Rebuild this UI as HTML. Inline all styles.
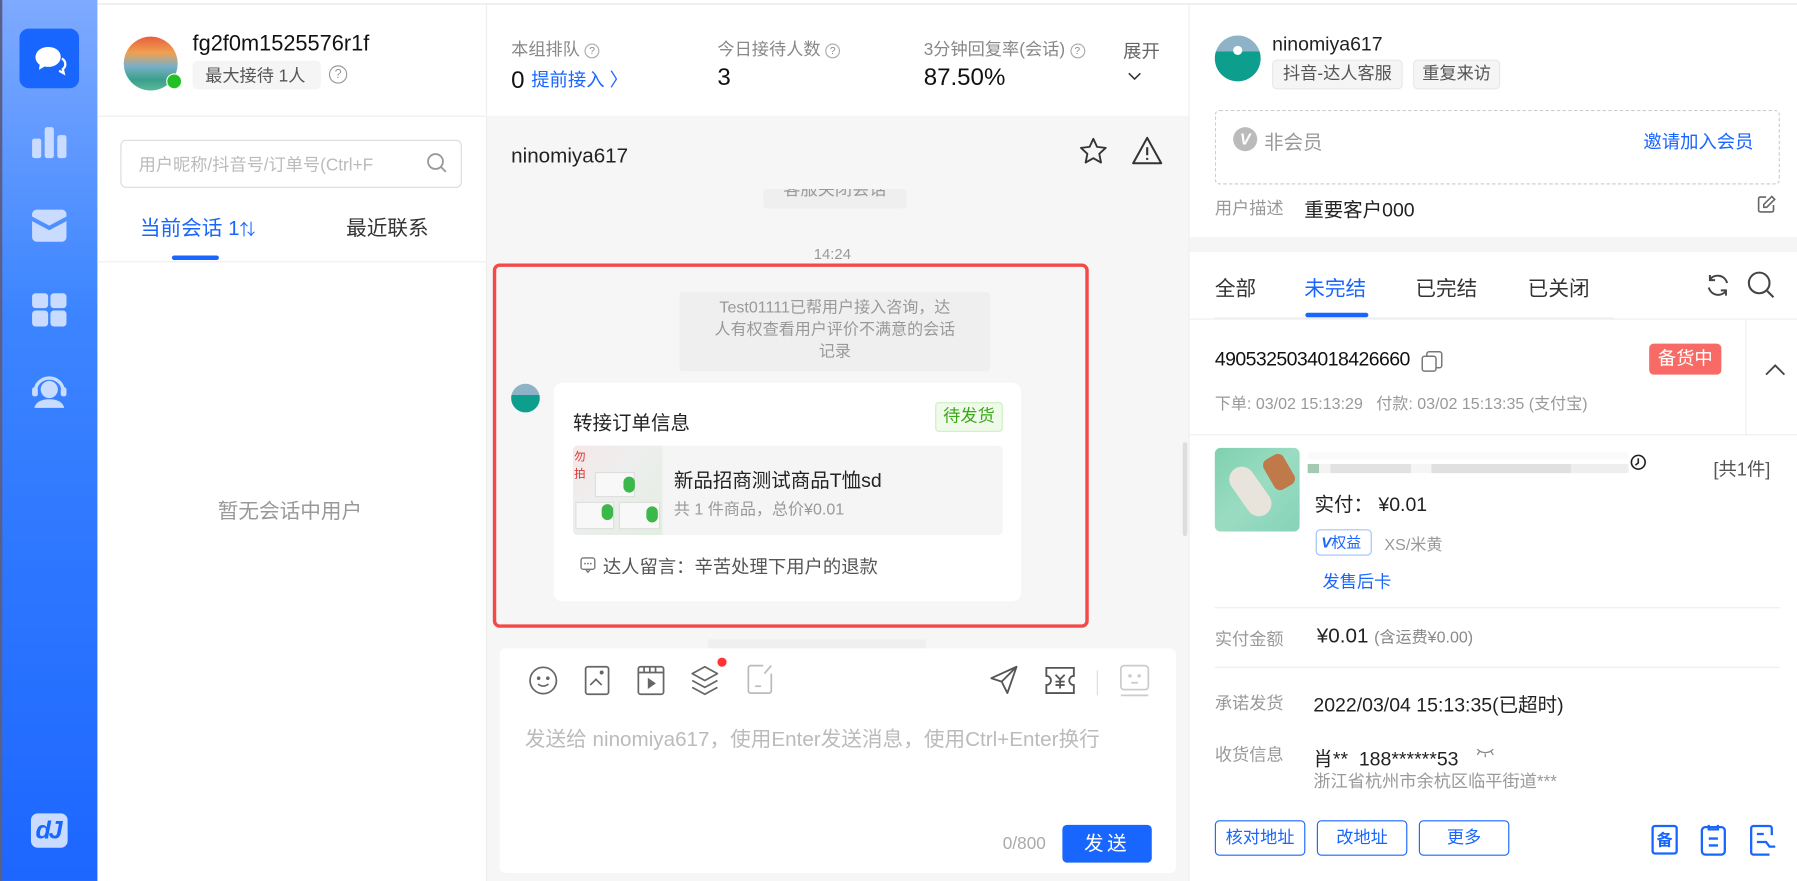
<!DOCTYPE html>
<html><head><meta charset="utf-8">
<style>
*{box-sizing:border-box;margin:0;padding:0}
html,body{width:1797px;height:881px;overflow:hidden;background:#fff}
body{font-family:"Liberation Sans","Noto Sans CJK SC",sans-serif;color:#222}
#w{position:absolute;left:0;top:0;width:1568px;height:769px;transform:scale(1.14605,1.1456);transform-origin:0 0;background:#fff;overflow:hidden}
.a{position:absolute}
.g{color:#999}
.bl{color:#1966ff}
svg{position:absolute;overflow:visible}
</style></head><body><div id="w">
<!-- sidebar -->
<div class="a" style="left:0;top:0;width:85px;height:769px;background:linear-gradient(180deg,#7eaaff 0%,#3d85ff 35%,#2a74ff 70%,#1d66ff 100%)"></div>
<div class="a" style="left:0;top:0;width:2px;height:769px;background:#5a5f8a"></div>
<div class="a" style="left:17px;top:25px;width:52px;height:52px;background:#1966ff;border-radius:8px"></div>
<svg style="left:30px;top:40px" width="28" height="26" viewBox="0 0 28 26"><path d="M12 1C5.5 1 1 5 1 10c0 2.8 1.4 5 3.6 6.5L4 21l5-3c1 .3 2 .4 3 .4 6.5 0 11-4 11-8.9S18.5 1 12 1z" fill="#fff"/><path d="M24 11c2 1.3 3 3 3 5 0 1.8-.8 3.3-2.2 4.4l.8 3.6-4-2.2" fill="none" stroke="#fff" stroke-width="2"/></svg>
<svg style="left:28px;top:110px" width="30" height="28"><rect x="0" y="11" width="8" height="17" rx="2" fill="#c9dcff"/><rect x="11" y="1" width="8" height="27" rx="2" fill="#c9dcff"/><rect x="22" y="8" width="8" height="20" rx="2" fill="#c9dcff"/></svg>
<svg style="left:28px;top:183px" width="30" height="28"><path d="M0 4a4 4 0 014-4h22a4 4 0 014 4v2L15 14 0 6z" fill="#c9dcff"/><path d="M0 10l15 8 15-8v14a4 4 0 01-4 4H4a4 4 0 01-4-4z" fill="#c9dcff"/></svg>
<svg style="left:28px;top:256px" width="30" height="29"><rect x="0" y="0" width="14" height="13" rx="3" fill="#c9dcff"/><rect x="16" y="0" width="14" height="13" rx="3" fill="#c9dcff"/><rect x="0" y="15" width="14" height="14" rx="3" fill="#c9dcff"/><rect x="16" y="15" width="14" height="14" rx="3" fill="#c9dcff"/></svg>
<svg style="left:27px;top:326px" width="32" height="30"><path d="M4 15a12 11 0 0124 0" fill="none" stroke="#c9dcff" stroke-width="3"/><circle cx="16" cy="14" r="7.5" fill="#c9dcff"/><rect x="1" y="12" width="5" height="8" rx="2" fill="#c9dcff"/><rect x="26" y="12" width="5" height="8" rx="2" fill="#c9dcff"/><path d="M3 30c1-5 6-7.5 13-7.5s12 2.5 13 7.5z" fill="#c9dcff"/></svg>
<div class="a" style="left:27px;top:710px;width:32px;height:30px;background:#c9dcff;border-radius:6px"></div>
<div class="a" style="left:31px;top:712px;font:italic bold 22px 'Liberation Sans';color:#1966ff;letter-spacing:-2px">dJ</div>

<div class="a" style="left:85px;top:3px;width:1483px;height:1px;background:#e3e3e3"></div>
<!-- left panel -->
<div class="a" style="left:85px;top:101px;width:340px;height:1px;background:#eee"></div>
<div class="a" style="left:108px;top:32px;width:47px;height:47px;border-radius:50%;background:linear-gradient(180deg,#e8603c 0%,#f0a050 30%,#7ab0c8 55%,#3aa08a 80%,#5cb89a 100%)"></div>
<div class="a" style="left:145px;top:64px;width:14px;height:14px;border-radius:50%;background:#22c022;border:1px solid #fff"></div>
<div class="a" style="left:168px;top:28px;font-size:19px;color:#111">fg2f0m1525576r1f</div>
<div class="a" style="left:168px;top:53px;width:112px;height:25px;background:#f5f5f5;border-radius:4px;font-size:15px;color:#555;padding:2px 0 0 11px">最大接待 1人</div>
<div class="a" style="left:287px;top:57px;width:16px;height:16px;border:1px solid #999;border-radius:50%;font-size:11px;color:#999;text-align:center;line-height:14px">?</div>
<div class="a" style="left:105px;top:122px;width:298px;height:42px;border:1px solid #dcdcdc;border-radius:5px"></div>
<div class="a" style="left:121px;top:133px;font-size:15px;color:#bbb;width:220px;overflow:hidden;white-space:nowrap">用户昵称/抖音号/订单号(Ctrl+F</div>
<svg style="left:372px;top:133px" width="20" height="20"><circle cx="8" cy="8" r="6.5" fill="none" stroke="#999" stroke-width="1.6"/><path d="M13 13l4 4" stroke="#999" stroke-width="1.6"/></svg>
<div class="a bl" style="left:122px;top:185px;font-size:18px">当前会话 1<span style="font-size:14px">⇅</span></div>
<div class="a" style="left:302px;top:185px;font-size:18px;color:#333">最近联系</div>
<div class="a" style="left:150px;top:223px;width:41px;height:4px;border-radius:2px;background:#1966ff"></div>
<div class="a" style="left:85px;top:228px;width:340px;height:1px;background:#eee"></div>
<div class="a g" style="left:190px;top:432px;font-size:18px">暂无会话中用户</div>
<div class="a" style="left:424px;top:4px;width:1px;height:765px;background:#eee"></div>

<!-- middle -->
<div class="a" style="left:425px;top:101px;width:612px;height:668px;background:#f6f6f6"></div>
<div class="a" style="left:446px;top:32px;font-size:15px;color:#888">本组排队 <span style="display:inline-block;width:13px;height:13px;border:1px solid #aaa;border-radius:50%;font-size:9px;text-align:center;line-height:11px;vertical-align:1px">?</span></div>
<div class="a" style="left:446px;top:56px;font-size:21px;color:#111">0 <span class="bl" style="font-size:16px;vertical-align:2px">提前接入 〉</span></div>
<div class="a" style="left:626px;top:32px;font-size:15px;color:#888">今日接待人数 <span style="display:inline-block;width:13px;height:13px;border:1px solid #aaa;border-radius:50%;font-size:9px;text-align:center;line-height:11px;vertical-align:1px">?</span></div>
<div class="a" style="left:626px;top:56px;font-size:21px;color:#111">3</div>
<div class="a" style="left:806px;top:32px;font-size:15px;color:#888">3分钟回复率(会话) <span style="display:inline-block;width:13px;height:13px;border:1px solid #aaa;border-radius:50%;font-size:9px;text-align:center;line-height:11px;vertical-align:1px">?</span></div>
<div class="a" style="left:806px;top:56px;font-size:21px;color:#111">87.50%</div>
<div class="a" style="left:980px;top:31px;font-size:16px;color:#666">展开</div>
<svg style="left:984px;top:63px" width="12" height="8"><path d="M1 1l5 5 5-5" fill="none" stroke="#333" stroke-width="1.4"/></svg>
<div class="a" style="left:446px;top:126px;font-size:18px;color:#222">ninomiya617</div>
<svg style="left:941px;top:119px" width="26" height="26" viewBox="0 0 24 24"><path d="M12 2l3 6.5 7 .8-5.2 4.8 1.4 7L12 17.6 5.8 21.1l1.4-7L2 9.3l7-.8z" fill="none" stroke="#333" stroke-width="1.5" stroke-linejoin="round"/></svg>
<svg style="left:987px;top:118px" width="28" height="28" viewBox="0 0 24 24"><path d="M12 2L1.5 21h21z" fill="none" stroke="#333" stroke-width="1.5" stroke-linejoin="round"/><path d="M12 9v6M12 17v1.5" stroke="#333" stroke-width="1.6"/></svg>
<div class="a" style="left:666px;top:165px;width:125px;height:17px;background:#efefef;border-radius:3px;overflow:hidden"><div style="margin-top:-11px;text-align:center;font-size:15px;color:#999">客服关闭会话</div></div>
<div class="a g" style="left:710px;top:214px;font-size:13px;height:16px;overflow:hidden">14:24</div>
<div class="a" style="left:430px;top:230px;width:520px;height:318px;border:3px solid #f24a48;border-radius:6px"></div>
<div class="a" style="left:593px;top:255px;width:271px;height:69px;background:#efefef;border-radius:3px;font-size:14px;color:#999;text-align:center;line-height:19px;padding-top:4px">Test01111已帮用户接入咨询，达<br>人有权查看用户评价不满意的会话<br>记录</div>
<div class="a" style="left:446px;top:335px;width:25px;height:25px;border-radius:50%;background:linear-gradient(180deg,#8fb3c6 40%,#0e9e8e 40%)"></div>
<div class="a" style="left:483px;top:334px;width:408px;height:191px;background:#fff;border-radius:8px"></div>
<div class="a" style="left:500px;top:355px;font-size:17px;color:#222">转接订单信息</div>
<div class="a" style="left:816px;top:351px;width:59px;height:26px;background:#effaea;border:1px solid #cdeec0;border-radius:3px;color:#3aa818;font-size:15px;text-align:center;line-height:24px">待发货</div>
<div class="a" style="left:500px;top:389px;width:375px;height:78px;background:#f5f5f5;border-radius:4px"></div>
<div class="a" style="left:500px;top:389px;width:78px;height:78px;background:linear-gradient(135deg,#f4e8e8,#eeeeee 40%,#e2eee0);border-radius:4px 0 0 4px"></div>
<div class="a" style="left:519px;top:412px;width:35px;height:22px;background:#f8f8f8;border:1px solid #ddd"></div><div class="a" style="left:544px;top:416px;width:10px;height:14px;background:#3cb84a;border-radius:5px"></div>
<div class="a" style="left:502px;top:438px;width:34px;height:24px;background:#f8f8f8;border:1px solid #ddd"></div><div class="a" style="left:525px;top:440px;width:10px;height:14px;background:#3cb84a;border-radius:5px"></div>
<div class="a" style="left:540px;top:438px;width:36px;height:24px;background:#f8f8f8;border:1px solid #ddd"></div><div class="a" style="left:564px;top:442px;width:10px;height:14px;background:#3cb84a;border-radius:5px"></div>
<div class="a" style="left:501px;top:390px;font-size:10px;color:#d33">勿<br>拍</div>
<div class="a" style="left:588px;top:405px;font-size:17px;color:#222">新品招商测试商品T恤sd</div>
<div class="a g" style="left:588px;top:434px;font-size:14px">共 1 件商品，总价¥0.01</div>
<svg style="left:506px;top:486px" width="14" height="14"><rect x="1" y="1" width="12" height="10" rx="2" fill="none" stroke="#777" stroke-width="1.2"/><path d="M5 11l2 2.5 2-2.5" fill="none" stroke="#777" stroke-width="1.2"/><circle cx="4.5" cy="6" r=".8" fill="#777"/><circle cx="7" cy="6" r=".8" fill="#777"/><circle cx="9.5" cy="6" r=".8" fill="#777"/></svg>
<div class="a" style="left:526px;top:481px;font-size:16px;color:#555">达人留言：辛苦处理下用户的退款</div>
<div class="a" style="left:1032px;top:386px;width:4px;height:82px;background:#ddd;border-radius:2px"></div>
<div class="a" style="left:618px;top:558px;width:190px;height:10px;background:#efefef"></div>
<!-- input -->
<div class="a" style="left:436px;top:566px;width:590px;height:196px;background:#fff;border-radius:5px"></div>
<svg style="left:461px;top:581px" width="26" height="26" viewBox="0 0 26 26" fill="none" stroke="#666" stroke-width="1.5"><circle cx="13" cy="13" r="11.5"/><circle cx="9" cy="11" r=".8" fill="#666"/><circle cx="17" cy="11" r=".8" fill="#666"/><path d="M8.5 16c2.5 2.5 6.5 2.5 9 0"/></svg>
<svg style="left:510px;top:581px" width="22" height="26" fill="none" stroke="#666" stroke-width="1.5"><rect x="1" y="1" width="20" height="24" rx="2"/><path d="M5 17l5-5 5 5"/><circle cx="15" cy="6" r="1" fill="#666"/></svg>
<svg style="left:556px;top:581px" width="24" height="26" fill="none" stroke="#666" stroke-width="1.5"><rect x="1" y="1" width="22" height="24" rx="2"/><path d="M1 6h22M6 1v5M11 1v5M16 1v5"/><path d="M10 12v7l5-3.5z" fill="#666"/></svg>
<svg style="left:602px;top:580px" width="26" height="28" fill="none" stroke="#666" stroke-width="1.5" stroke-linejoin="round"><path d="M13 2L2 8l11 6 11-6z"/><path d="M2 14l11 6 11-6M2 20l11 6 11-6"/></svg>
<div class="a" style="left:626px;top:574px;width:8px;height:8px;border-radius:50%;background:#f33"></div>
<svg style="left:652px;top:580px" width="22" height="26" fill="none" stroke="#bbb" stroke-width="1.5"><path d="M14 1H3a2 2 0 00-2 2v20a2 2 0 002 2h16a2 2 0 002-2V8M21 1l-6 7"/><path d="M7 19h5"/></svg>
<svg style="left:863px;top:580px" width="26" height="27" fill="none" stroke="#555" stroke-width="1.6" stroke-linejoin="round"><path d="M24 2L2 12l9 3 5 10z"/><path d="M24 2L11 15"/></svg>
<svg style="left:911px;top:581px" width="28" height="26" fill="none" stroke="#555" stroke-width="1.6"><path d="M2 2h24v7a4 4 0 000 8v7H2v-7a4 4 0 000-8z"/><path d="M10 8l4 4 4-4M14 12v8M10 14h8M10 17h8"/></svg>
<div class="a" style="left:957px;top:585px;width:1px;height:22px;background:#ddd"></div>
<svg style="left:976px;top:580px" width="28" height="30" fill="none" stroke="#ccc" stroke-width="1.5"><rect x="2" y="1" width="24" height="21" rx="3"/><path d="M2 27h24M11 16h6"/><circle cx="10" cy="10" r=".8" fill="#ccc"/><circle cx="18" cy="10" r=".8" fill="#ccc"/></svg>
<div class="a" style="left:458px;top:631px;font-size:18px;color:#bbb">发送给 ninomiya617，使用Enter发送消息，使用Ctrl+Enter换行</div>
<div class="a" style="left:875px;top:728px;font-size:15px;color:#aaa">0/800</div>
<div class="a" style="left:927px;top:720px;width:78px;height:33px;background:#1966ff;border-radius:4px;color:#fff;font-size:17px;text-align:center;line-height:33px;letter-spacing:3px">发送</div>

<!-- right panel -->
<div class="a" style="left:1037px;top:4px;width:1px;height:765px;background:#eee"></div>
<div class="a" style="left:1060px;top:31px;width:40px;height:40px;border-radius:50%;background:linear-gradient(180deg,#8fb3c6 35%,#0e9e8e 35%)"></div>
<div class="a" style="left:1076px;top:40px;width:8px;height:8px;border-radius:50%;background:#fff"></div>
<div class="a" style="left:1110px;top:29px;font-size:17px;color:#222">ninomiya617</div>
<div class="a" style="left:1110px;top:52px;width:114px;height:26px;background:#f5f5f5;border:1px solid #e8e8e8;border-radius:4px;font-size:15px;color:#555;text-align:center;line-height:24px">抖音-达人客服</div>
<div class="a" style="left:1233px;top:52px;width:76px;height:26px;background:#f5f5f5;border:1px solid #e8e8e8;border-radius:4px;font-size:15px;color:#555;text-align:center;line-height:24px">重复来访</div>
<div class="a" style="left:1060px;top:96px;width:493px;height:65px;border:1px dashed #ccc;border-radius:4px"></div>
<div class="a" style="left:1076px;top:111px;width:21px;height:21px;border-radius:50%;background:#bbb;color:#fff;font:italic bold 14px 'Liberation Sans';text-align:center;line-height:21px">V</div>
<div class="a" style="left:1103px;top:110px;font-size:17px;color:#999">非会员</div>
<div class="a bl" style="left:1434px;top:110px;font-size:16px">邀请加入会员</div>
<div class="a g" style="left:1060px;top:171px;font-size:15px">用户描述</div>
<div class="a" style="left:1138px;top:169px;font-size:17px;color:#222">重要客户000</div>
<svg style="left:1533px;top:170px" width="17" height="17" fill="none" stroke="#666" stroke-width="1.4"><path d="M8 2H3a1.5 1.5 0 00-1.5 1.5v10A1.5 1.5 0 003 15h10a1.5 1.5 0 001.5-1.5V9"/><path d="M13 1.5l2.5 2.5-7 7H6V8.5z"/></svg>
<div class="a" style="left:1038px;top:207px;width:530px;height:13px;background:#f5f5f5"></div>
<div class="a" style="left:1060px;top:238px;font-size:18px;color:#333">全部</div>
<div class="a bl" style="left:1138px;top:238px;font-size:18px">未完结</div>
<div class="a" style="left:1235px;top:238px;font-size:18px;color:#333">已完结</div>
<div class="a" style="left:1333px;top:238px;font-size:18px;color:#333">已关闭</div>
<div class="a" style="left:1139px;top:273px;width:55px;height:4px;border-radius:2px;background:#1966ff"></div>
<div class="a" style="left:1060px;top:277px;width:348px;height:1px;background:#eee"></div>
<div class="a" style="left:1038px;top:278px;width:530px;height:1px;background:#eee"></div>
<svg style="left:1488px;top:238px" width="22" height="22" fill="none" stroke="#444" stroke-width="1.7"><path d="M19 9A8.5 8.5 0 004 6M3 13a8.5 8.5 0 0015 3"/><path d="M4 2v4.5h4.5M18 20v-4.5h-4.5"/></svg>
<svg style="left:1524px;top:236px" width="26" height="26" fill="none" stroke="#444" stroke-width="1.8"><circle cx="11" cy="11" r="9"/><path d="M18 18l5.5 5.5"/></svg>
<div class="a" style="left:1523px;top:279px;width:1px;height:101px;background:#eee"></div>
<div class="a" style="left:1060px;top:304px;font-size:17px;color:#111;letter-spacing:-0.5px">4905325034018426660</div>
<svg style="left:1240px;top:306px" width="19" height="19" fill="none" stroke="#777" stroke-width="1.3"><rect x="1" y="5" width="12" height="13" rx="2"/><path d="M5 5V3a2 2 0 012-2h9a2 2 0 012 2v10a2 2 0 01-2 2h-3"/></svg>
<div class="a" style="left:1439px;top:300px;width:63px;height:27px;background:#f86a66;border-radius:4px;color:#fff;font-size:16px;text-align:center;line-height:27px">备货中</div>
<svg style="left:1540px;top:317px" width="18" height="12"><path d="M1 10l8-8 8 8" fill="none" stroke="#444" stroke-width="1.6"/></svg>
<div class="a g" style="left:1060px;top:342px;font-size:14px">下单: 03/02 15:13:29&nbsp;&nbsp; 付款: 03/02 15:13:35 (支付宝)</div>
<div class="a" style="left:1038px;top:379px;width:530px;height:1px;background:#eee"></div>
<div class="a" style="left:1060px;top:391px;width:74px;height:73px;border-radius:5px;background:linear-gradient(135deg,#7fd0b0,#9adcc2 50%,#86d3b8)"></div>
<div class="a" style="left:1080px;top:405px;width:22px;height:48px;border-radius:11px;background:#e8e4dc;transform:rotate(-35deg)"></div>
<div class="a" style="left:1106px;top:397px;width:20px;height:30px;border-radius:6px;background:#c07a4a;transform:rotate(-30deg)"></div>
<div class="a" style="left:1141px;top:395px;width:280px;height:6px;background:#fafafa"></div>
<div class="a" style="left:1141px;top:405px;width:280px;height:8px;background:linear-gradient(90deg,#a6c9b4 0 10px,#f3f3f3 10px 20px,#e2e2e2 20px 90px,#f5f5f5 90px 108px,#e0e0e0 108px 230px,#eee 230px)"></div>
<svg style="left:1422px;top:396px" width="15" height="15" fill="none" stroke="#222" stroke-width="1.4"><circle cx="7.5" cy="7.5" r="6"/><path d="M7.5 4v4l-2.5 2"/></svg>
<div class="a" style="left:1495px;top:396px;font-size:16px;color:#555">[共1件]</div>
<div class="a" style="left:1147px;top:426px;font-size:17px;color:#222">实付： ¥0.01</div>
<div class="a" style="left:1148px;top:462px;width:49px;height:23px;border:1px solid #9ec0ff;border-radius:4px;color:#1966ff;font-size:13px;line-height:21px;padding-left:4px"><b style="font-style:italic">V</b>权益</div>
<div class="a g" style="left:1208px;top:465px;font-size:14px">XS/米黄</div>
<div class="a bl" style="left:1154px;top:497px;font-size:15px">发售后卡</div>
<div class="a" style="left:1060px;top:530px;width:493px;height:1px;background:#eee"></div>
<div class="a g" style="left:1060px;top:547px;font-size:15px">实付金额</div>
<div class="a" style="left:1149px;top:545px;font-size:18px;color:#222">¥0.01 <span style="font-size:14px;color:#888">(含运费¥0.00)</span></div>
<div class="a" style="left:1060px;top:582px;width:493px;height:1px;background:#eee"></div>
<div class="a g" style="left:1060px;top:603px;font-size:15px">承诺发货</div>
<div class="a" style="left:1146px;top:601px;font-size:17px;color:#222">2022/03/04 15:13:35(已超时)</div>
<div class="a g" style="left:1060px;top:648px;font-size:15px">收货信息</div>
<div class="a" style="left:1146px;top:648px;font-size:17px;color:#222">肖**&nbsp; 188******53</div>
<svg style="left:1288px;top:651px" width="16" height="10" fill="none" stroke="#888" stroke-width="1.1"><path d="M1 3c4 4 10 4 14 0M3 5l-2 3M8 7v3M13 5l2 3"/></svg>
<div class="a g" style="left:1146px;top:671px;font-size:15px">浙江省杭州市余杭区临平街道***</div>
<div class="a bl" style="left:1060px;top:716px;width:79px;height:31px;border:1px solid #1966ff;border-radius:4px;font-size:15px;text-align:center;line-height:29px">核对地址</div>
<div class="a bl" style="left:1149px;top:716px;width:79px;height:31px;border:1px solid #1966ff;border-radius:4px;font-size:15px;text-align:center;line-height:29px">改地址</div>
<div class="a bl" style="left:1238px;top:716px;width:79px;height:31px;border:1px solid #1966ff;border-radius:4px;font-size:15px;text-align:center;line-height:29px">更多</div>
<div class="a bl" style="left:1441px;top:720px;width:23px;height:26px;border:2px solid #1966ff;border-radius:3px;font-size:14px;text-align:center;line-height:22px;font-weight:bold">备</div>
<svg style="left:1483px;top:719px" width="24" height="28" fill="none" stroke="#1966ff" stroke-width="2"><rect x="2" y="3" width="20" height="24" rx="3"/><path d="M8 1v4h8V1M8 13h8M8 19h8"/></svg>
<svg style="left:1526px;top:719px" width="24" height="28" fill="none" stroke="#1966ff" stroke-width="2"><path d="M20 10V4a2 2 0 00-2-2H4a2 2 0 00-2 2v21a2 2 0 002 2h14"/><path d="M7 9h6M7 16h8l3 4h5"/></svg>
</div></body></html>
